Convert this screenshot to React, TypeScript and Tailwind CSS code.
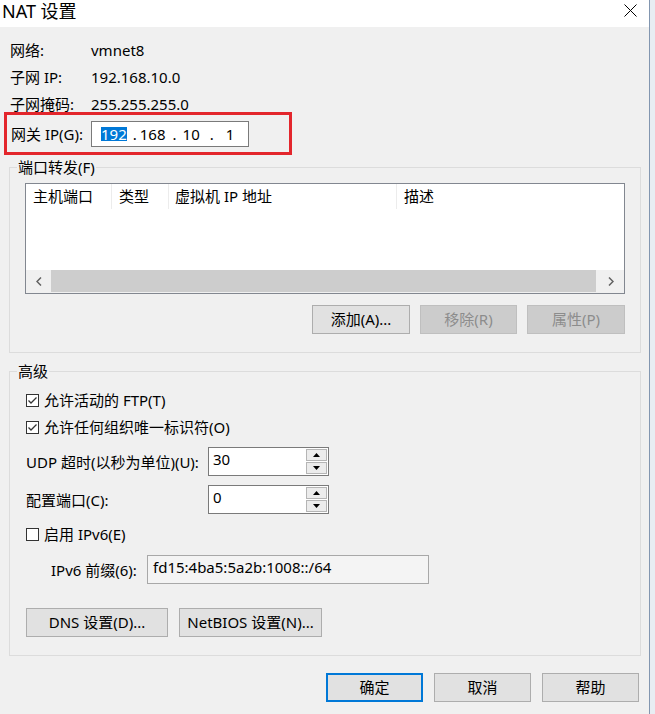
import type { ReactNode } from "react";

function Btn({ children, w, kind = "normal" }: { children: ReactNode; w: string; kind?: "normal" | "disabled" | "default" }) {
  const base = "flex h-[29px] items-center justify-center pb-[2px]";
  const look =
    kind === "disabled"
      ? "border border-[#bfbfbf] bg-[#cccccc] text-[#8c8c8c]"
      : kind === "default"
        ? "border-2 border-[#0078d7] bg-[#e1e1e1] h-[28px]"
        : "border border-[#adadad] bg-[#e1e1e1]";
  return <div className={`${base} ${look} ${w}`}>{children}</div>;
}

function Check({ checked, label }: { checked?: boolean; label: string }) {
  return (
    <div className="flex h-[20px] items-center">
      <div className="flex h-[13px] w-[13px] items-center justify-center border border-[#333333] bg-white">
        {checked && (
          <svg width="11" height="11" viewBox="0 0 11 11">
            <polyline points="1.5,5.5 4,8 9.5,2.5" fill="none" stroke="#333" strokeWidth="1.3" />
          </svg>
        )}
      </div>
      <span className="ml-[5px]">{label}</span>
    </div>
  );
}

function Spin({ value }: { value: string }) {
  return (
    <div className="flex h-[29px] w-[121px] border border-[#7a7a7a] bg-white">
      <span className="flex-1 pl-[4px] pt-px">{value}</span>
      <div className="flex w-[22px] flex-col gap-px py-px pr-px">
        <div className="flex flex-1 items-center justify-center border border-[#b5b5b5] bg-[#ececec]">
          <svg width="7" height="4" viewBox="0 0 7 4">
            <polygon points="0,4 3.5,0 7,4" fill="#000" />
          </svg>
        </div>
        <div className="flex flex-1 items-center justify-center border border-[#b5b5b5] bg-[#ececec]">
          <svg width="7" height="4" viewBox="0 0 7 4">
            <polygon points="0,0 7,0 3.5,4" fill="#000" />
          </svg>
        </div>
      </div>
    </div>
  );
}

function InfoRow({ label, value }: { label: string; value: string }) {
  return (
    <div className="flex h-[20px] items-center">
      <span className="w-[81px]">{label}</span>
      <span>{value}</span>
    </div>
  );
}

export default function App() {
  return (
    <div className="flex h-[714px] w-[655px] overflow-hidden bg-[#f0f0f0] font-['Noto_Sans','Noto_Sans_CJK_SC',sans-serif] text-[15px] leading-[20px] text-black">
      <div className="flex w-[649px] flex-col">
        {/* title bar */}
        <div className="flex h-[27px] bg-white">
          <span className="pl-[2px] text-[18px] leading-[22px]">NAT 设置</span>
          <span className="ml-auto mr-[12px] mt-[4px]">
            <svg width="13" height="13" viewBox="0 0 13 13">
              <path d="M0.5 0.5 L12.5 12.5 M12.5 0.5 L0.5 12.5" stroke="#000" strokeWidth="1" />
            </svg>
          </span>
        </div>

        <div className="flex flex-col pt-[13px]">
          <div className="flex flex-col gap-[7px] pl-[10px]">
            <InfoRow label="网络:" value="vmnet8" />
            <InfoRow label="子网 IP:" value="192.168.10.0" />
            <InfoRow label="子网掩码:" value="255.255.255.0" />
          </div>

          {/* gateway, marked in red */}
          <div className="ml-[4px] mt-[-2px] flex h-[43px] w-[288px] items-center border-[3px] border-[#e3262c]">
            <span className="w-[84px] pl-[4px]">网关 IP(G):</span>
            <div className="flex h-[26px] w-[158px] items-center border border-[#7a7a7a] bg-white pl-[9px]">
              <span className="bg-[#0078d7] leading-[14px] text-white">192</span>
              <span className="ml-[6px]">.</span>
              <span className="ml-[3px]">168</span>
              <span className="ml-[7px]">.</span>
              <span className="ml-[6px]">10</span>
              <span className="ml-[10px]">.</span>
              <span className="ml-[12px]">1</span>
            </div>
          </div>

          {/* port forwarding */}
          <fieldset className="ml-[9px] mt-[2px] w-[632px] border border-[#dcdcdc]">
            <legend className="ml-[7px] px-px leading-[20px]">端口转发(F)</legend>
            <div className="px-[15px] pb-[18px]">
              <div className="mt-[6px] flex h-[111px] flex-col border border-[#828790] bg-white">
                <div className="flex h-[25px] leading-[24px]">
                  <span className="w-[86px] border-r border-[#ececec] pl-[7px]">主机端口</span>
                  <span className="w-[57px] border-r border-[#ececec] pl-[7px]">类型</span>
                  <span className="w-[228px] border-r border-[#ececec] pl-[6px]">虚拟机 IP 地址</span>
                  <span className="flex-1 pl-[7px]">描述</span>
                </div>
                <div className="flex-1" />
                <div className="flex h-[23px] bg-[#f0f0f0]">
                  <div className="flex w-[25px] items-center justify-center">
                    <svg width="6" height="9" viewBox="0 0 6 9">
                      <polyline points="5,0.5 1,4.5 5,8.5" fill="none" stroke="#606060" strokeWidth="1.5" />
                    </svg>
                  </div>
                  <div className="flex flex-1 pb-px pr-[2px]">
                    <div className="flex-1 bg-[#cdcdcd]" />
                  </div>
                  <div className="flex w-[26px] items-center justify-center">
                    <svg width="6" height="9" viewBox="0 0 6 9">
                      <polyline points="1,0.5 5,4.5 1,8.5" fill="none" stroke="#606060" strokeWidth="1.5" />
                    </svg>
                  </div>
                </div>
              </div>
              <div className="mt-[11px] flex justify-end gap-[10px]">
                <Btn w="w-[98px]">添加(A)...</Btn>
                <Btn w="w-[97px]" kind="disabled">移除(R)</Btn>
                <Btn w="w-[98px]" kind="disabled">属性(P)</Btn>
              </div>
            </div>
          </fieldset>

          {/* advanced */}
          <fieldset className="ml-[9px] mt-[8px] w-[632px] border border-[#dcdcdc]">
            <legend className="ml-[7px] px-px leading-[20px]">高级</legend>
            <div className="flex flex-col pb-[18px] pl-[16px]">
              <div className="mt-[9px]">
                <Check checked label="允许活动的 FTP(T)" />
              </div>
              <div className="mt-[7px]">
                <Check checked label="允许任何组织唯一标识符(O)" />
              </div>
              <div className="mt-[10px] flex items-center">
                <span className="w-[182px]">UDP 超时(以秒为单位)(U):</span>
                <Spin value="30" />
              </div>
              <div className="mt-[9px] flex items-center">
                <span className="w-[182px]">配置端口(C):</span>
                <Spin value="0" />
              </div>
              <div className="mt-[10px]">
                <Check label="启用 IPv6(E)" />
              </div>
              <div className="mt-[11px] flex items-center">
                <span className="w-[121px] pl-[25px]">IPv6 前缀(6):</span>
                <div className="h-[29px] w-[282px] border border-[#a8a8a8] bg-[#f4f4f4] pl-[5px] pt-px">
                  fd15:4ba5:5a2b:1008::/64
                </div>
              </div>
              <div className="mt-[24px] flex gap-[11px]">
                <Btn w="w-[142px]">DNS 设置(D)...</Btn>
                <Btn w="w-[143px]">NetBIOS 设置(N)...</Btn>
              </div>
            </div>
          </fieldset>

          <div className="mt-[17px] flex justify-end gap-[11px] pr-[10px]">
            <Btn w="w-[97px]" kind="default">确定</Btn>
            <Btn w="w-[97px]">取消</Btn>
            <Btn w="w-[97px]">帮助</Btn>
          </div>
        </div>
      </div>
      <div className="w-px bg-[#8296b0]" />
      <div className="flex-1 bg-[#e8edf3]" />
    </div>
  );
}
